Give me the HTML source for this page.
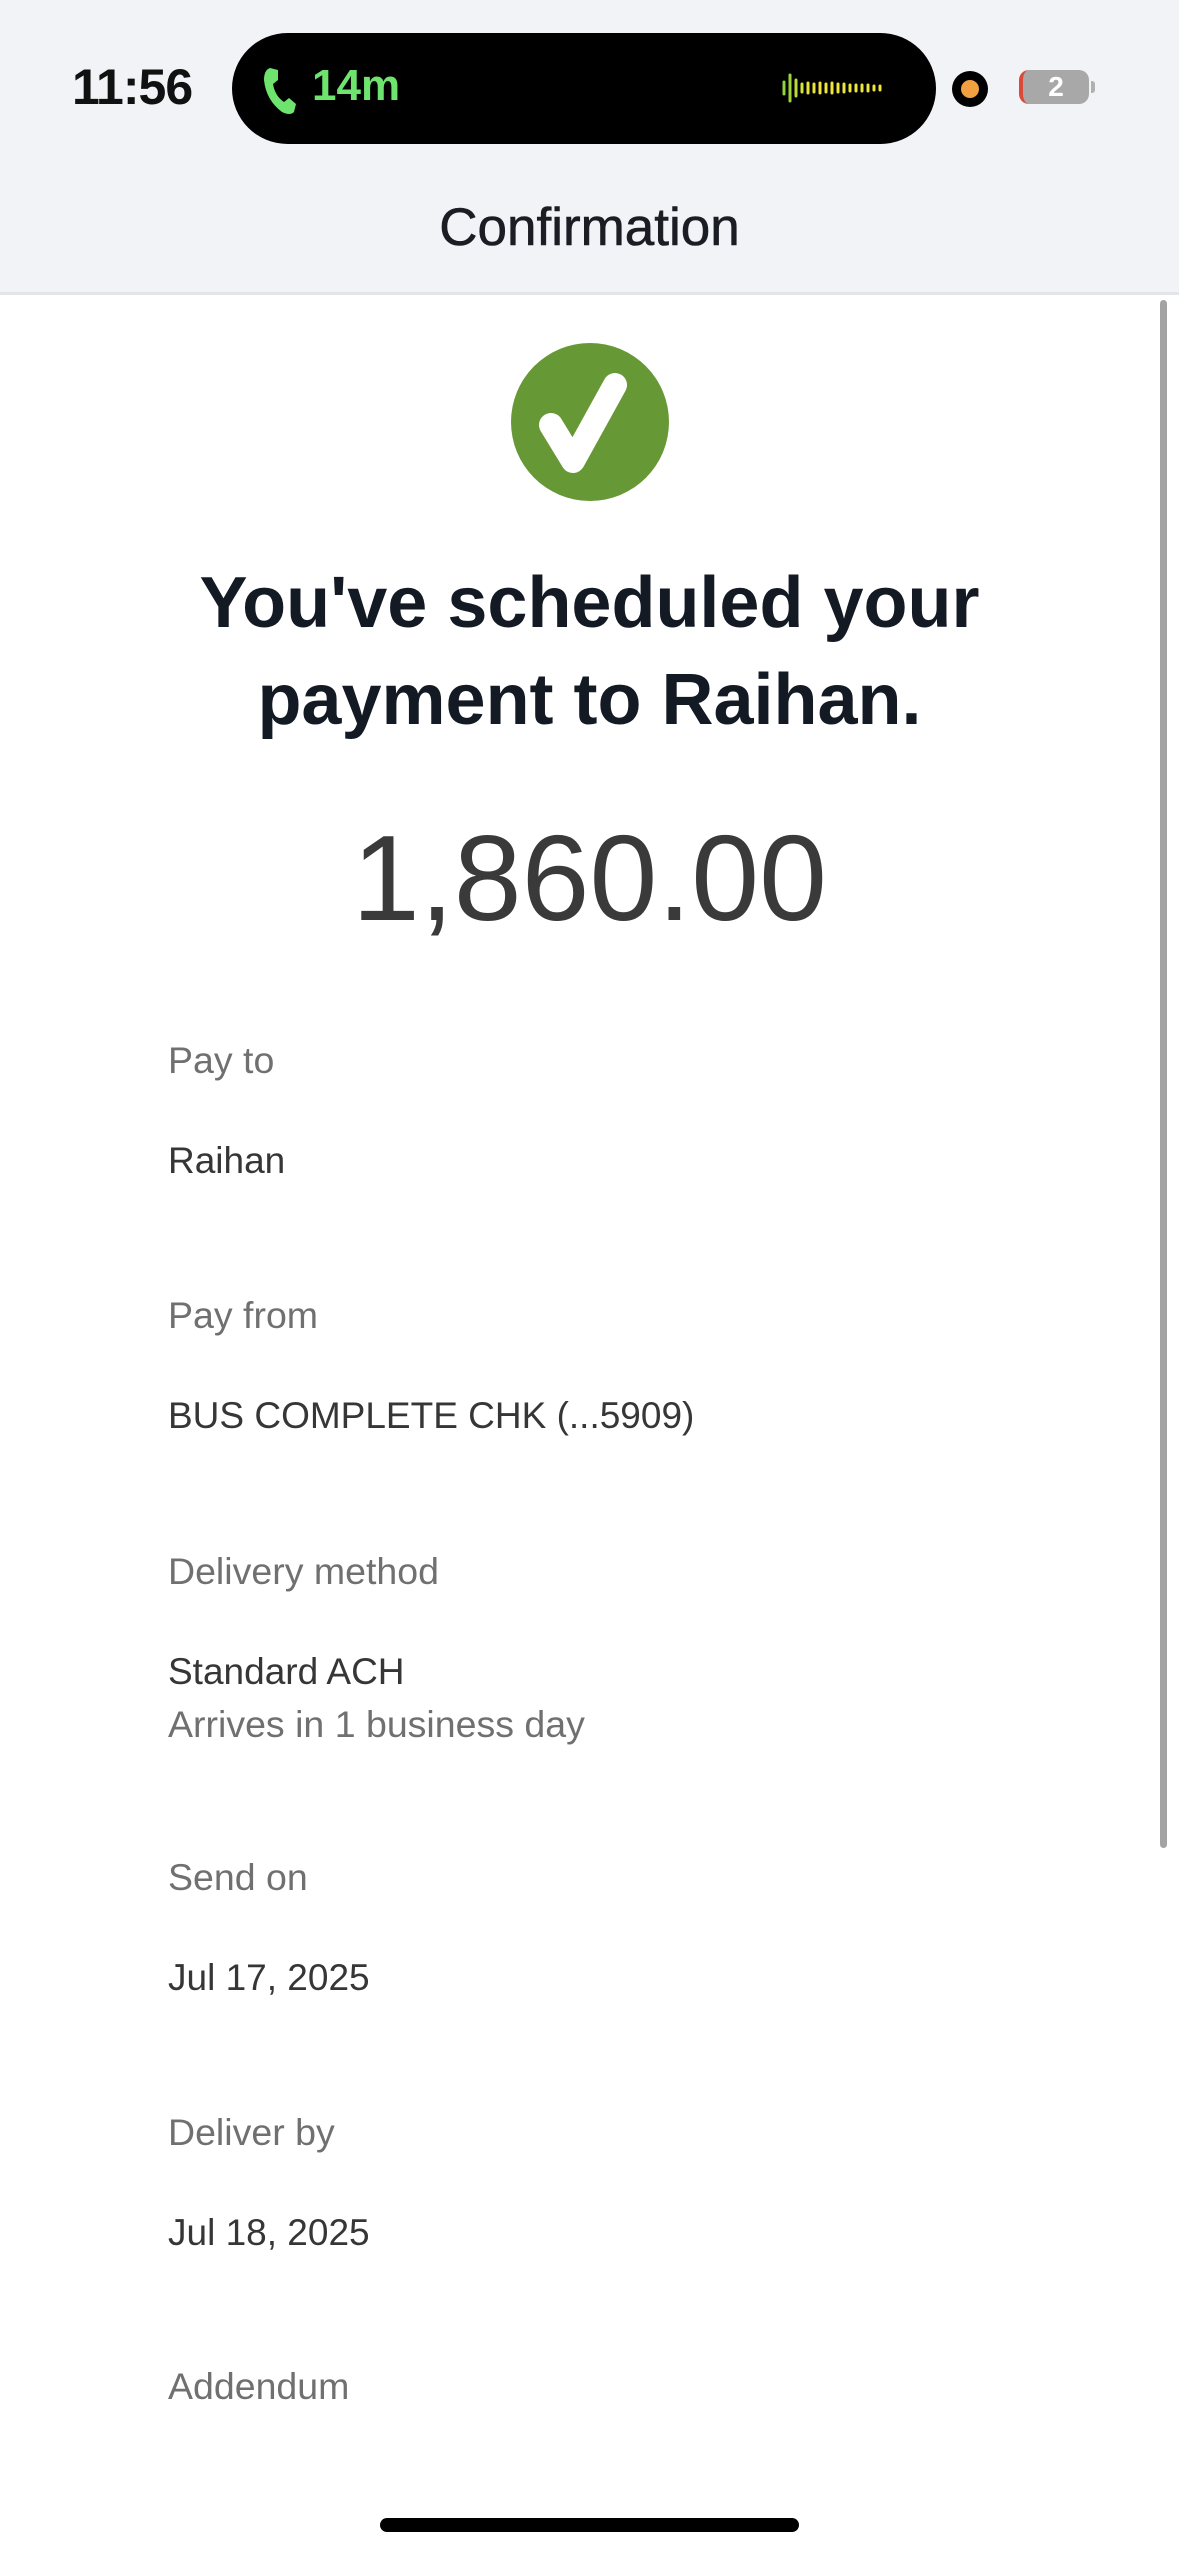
<!DOCTYPE html>
<html><head><meta charset="utf-8"><style>
*{margin:0;padding:0;box-sizing:border-box}
body{width:1179px;height:2556px;background:#fff;position:relative;overflow:hidden;font-family:"Liberation Sans",sans-serif}
.a{position:absolute;white-space:nowrap}
.hdr{position:absolute;left:0;top:0;width:1179px;height:295px;background:#f2f3f7;border-bottom:3px solid #e4e5ea}
.lbl{position:absolute;left:168px;font-size:37.5px;color:#707070;line-height:44px;height:44px}
.val{position:absolute;left:168px;font-size:37px;color:#363636;line-height:48px;height:48px}
</style></head><body>
<div class="hdr"></div>
<div class="a" style="left:72px;top:60px;font-size:50px;font-weight:bold;color:#111;line-height:54px;letter-spacing:-1px">11:56</div>
<div class="a" style="left:232px;top:33px;width:704px;height:111px;background:#000;border-radius:56px"></div>
<svg class="a" style="left:262px;top:66px" width="36" height="50" viewBox="0 0 36 50"><path d="M8 2 L16 4 L16 14 L11 18 Q13 30 22 36 L27 32 L34 38 L32 46 Q28 50 20 46 Q4 34 2 14 Q2 4 8 2Z" fill="#6ee36e"/></svg>
<div class="a" style="left:312px;top:61px;font-size:44px;font-weight:bold;color:#6ee36e;line-height:50px">14m</div>
<svg class="a" style="left:782px;top:72px" width="118" height="32" viewBox="0 0 118 32">
<g stroke-linecap="round" stroke-width="3">
<line x1="2" y1="10" x2="2" y2="22" stroke="#8fd43a"/><line x1="8" y1="3" x2="8" y2="29" stroke="#9ed43a"/><line x1="14" y1="8" x2="14" y2="24" stroke="#b8dc3a"/>
<line x1="20" y1="12" x2="20" y2="20" stroke="#d6e43a"/><line x1="26" y1="11" x2="26" y2="21" stroke="#e4e43a"/><line x1="32" y1="12" x2="32" y2="20" stroke="#e8e43a"/>
<line x1="38" y1="11" x2="38" y2="21" stroke="#eee63a"/><line x1="44" y1="12" x2="44" y2="20" stroke="#eee63a"/><line x1="50" y1="11" x2="50" y2="21" stroke="#eee63a"/>
<line x1="56" y1="12" x2="56" y2="20" stroke="#eee63a"/><line x1="62" y1="12" x2="62" y2="20" stroke="#eee63a"/><line x1="68" y1="13" x2="68" y2="19" stroke="#eee63a"/>
<line x1="74" y1="13" x2="74" y2="19" stroke="#eee63a"/><line x1="80" y1="13" x2="80" y2="19" stroke="#eee63a"/><line x1="86" y1="13" x2="86" y2="19" stroke="#eee63a"/>
<line x1="92" y1="14" x2="92" y2="18" stroke="#eee63a"/><line x1="98" y1="14" x2="98" y2="18" stroke="#eee63a"/></g></svg>
<div class="a" style="left:952px;top:71px;width:36px;height:36px;border-radius:50%;background:#000"></div>
<div class="a" style="left:961px;top:80px;width:18px;height:18px;border-radius:50%;background:#f0a040"></div>
<div class="a" style="left:1019px;top:70px;width:70px;height:34px;border-radius:10px;background:#a8a8a8;border-left:4px solid #d94a3a;color:#fff;font-weight:bold;font-size:28px;line-height:34px;text-align:center">2</div>
<div class="a" style="left:1091px;top:81px;width:4px;height:12px;border-radius:0 3px 3px 0;background:#b0b0b0"></div>
<div class="a" style="left:0;width:1179px;top:198px;text-align:center;font-size:53px;color:#1a1d24;line-height:60px;-webkit-text-stroke:0.6px #1a1d24">Confirmation</div>
<div class="a" style="left:1160px;top:300px;width:7px;height:1548px;background:#a3a3a3;border-radius:4px"></div>
<svg class="a" style="left:511px;top:343px" width="158" height="158" viewBox="0 0 158 158"><circle cx="79" cy="79" r="79" fill="#679836"/><path d="M40 82 L62 118 L104 42" fill="none" stroke="#fff" stroke-width="24" stroke-linecap="round" stroke-linejoin="round"/></svg>
<div class="a" style="left:0;width:1179px;top:555px;text-align:center;font-size:72px;font-weight:bold;color:#141a24;line-height:97px">You've scheduled your<br>payment to Raihan.</div>
<div class="a" style="left:0;width:1179px;top:808px;text-align:center;font-size:122px;color:#3a3a3a;line-height:140px">1,860.00</div>
<div class="lbl" style="top:1038px">Pay to</div>
<div class="val" style="top:1137px">Raihan</div>
<div class="lbl" style="top:1293px">Pay from</div>
<div class="val" style="top:1392px">BUS COMPLETE CHK (...5909)</div>
<div class="lbl" style="top:1549px">Delivery method</div>
<div class="val" style="top:1648px">Standard ACH</div>
<div class="lbl" style="top:1702px">Arrives in 1 business day</div>
<div class="lbl" style="top:1855px">Send on</div>
<div class="val" style="top:1954px">Jul 17, 2025</div>
<div class="lbl" style="top:2110px">Deliver by</div>
<div class="val" style="top:2209px">Jul 18, 2025</div>
<div class="lbl" style="top:2364px">Addendum</div>
<div class="a" style="left:380px;top:2518px;width:419px;height:14px;border-radius:7px;background:#000"></div>
</body></html>
